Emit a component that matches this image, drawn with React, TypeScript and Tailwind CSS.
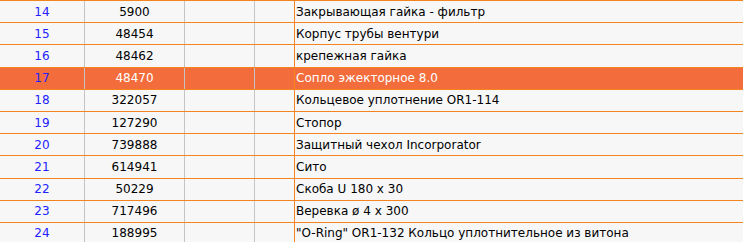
import React from "react";

const rows: [number, string, string][] = [
  [14, "5900", "Закрывающая гайка - фильтр"],
  [15, "48454", "Корпус трубы вентури"],
  [16, "48462", "крепежная гайка"],
  [17, "48470", "Сопло эжекторное 8.0"],
  [18, "322057", "Кольцевое уплотнение OR1-114"],
  [19, "127290", "Стопор"],
  [20, "739888", "Защитный чехол Incorporator"],
  [21, "614941", "Сито"],
  [22, "50229", "Скоба U 180 x 30"],
  [23, "717496", "Веревка ø 4 x 300"],
  [24, "188995", "\"O-Ring\" OR1-132 Кольцо уплотнительное из витона"],
];

export default function App() {
  return (
    <div className="w-[743px] h-[242px] overflow-hidden bg-[#f7f7f7] font-['DejaVu_Sans',Verdana,sans-serif] text-[12px]">
      {rows.map(([n, code, name]) => {
        const active = n === 17;
        return (
          <div
            key={n}
            className={`flex h-[22.2px] box-border border-t border-[#f5841f] ${active ? "bg-[#f26c3c] text-white" : "text-black"}`}
          >
            <div className="w-[85px] shrink-0 flex items-center justify-center border-r border-[#c4c4c4] text-[#2222ff]">
              {n}
            </div>
            <div className="w-[100px] shrink-0 flex items-center justify-center border-r border-[#c4c4c4]">
              {code}
            </div>
            <div className="w-[70px] shrink-0 border-r border-[#c4c4c4]" />
            <div className="w-[40px] shrink-0 border-r border-[#f5841f]" />
            <div className="flex-1 flex items-center pl-[1px] whitespace-nowrap">{name}</div>
          </div>
        );
      })}
    </div>
  );
}
